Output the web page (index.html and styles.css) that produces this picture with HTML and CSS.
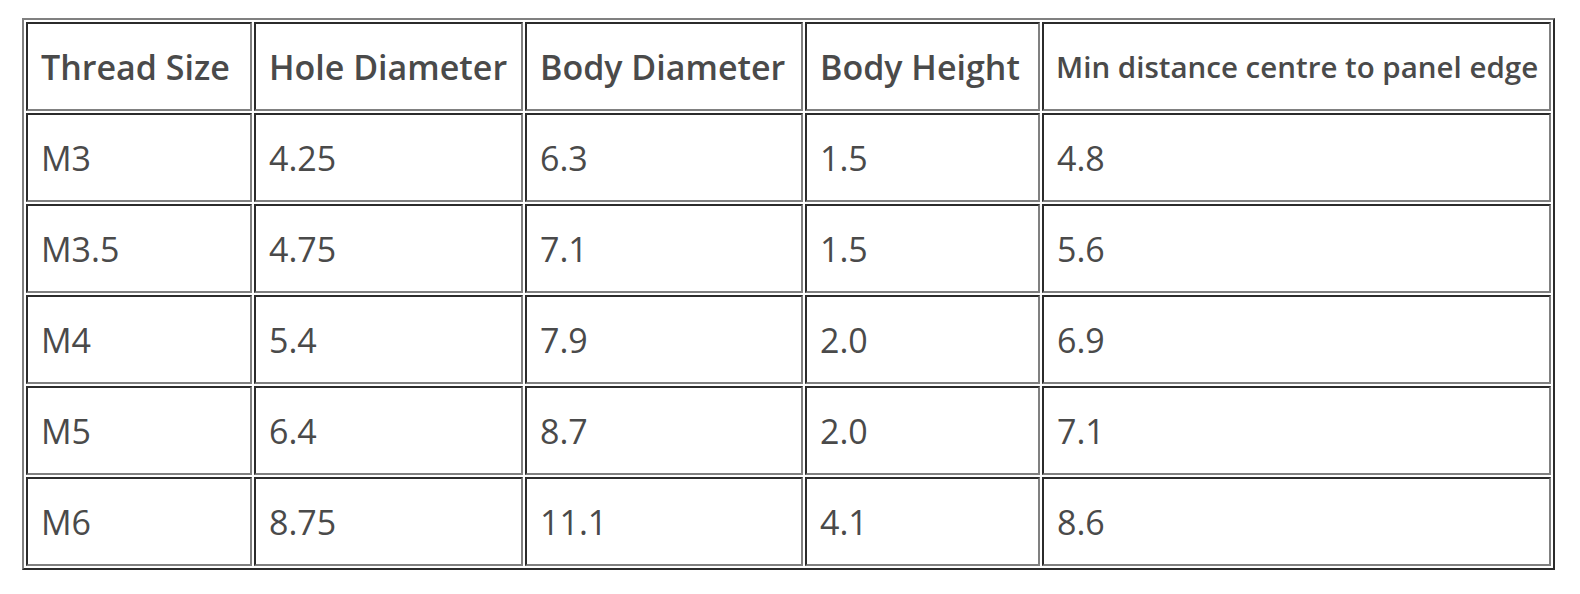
FILE: index.html
```html
<!DOCTYPE html>
<html>
<head>
<meta charset="utf-8">
<link rel="stylesheet" href="styles.css">
</head>
<body>
<div class="wrap">
<table class="spec">
  <colgroup>
    <col class="c1"><col class="c2"><col class="c3"><col class="c4"><col class="c5">
  </colgroup>
  <thead>
    <tr>
      <th>Thread Size</th>
      <th>Hole Diameter</th>
      <th>Body Diameter</th>
      <th>Body Height</th>
      <th class="small">Min distance centre to panel edge</th>
    </tr>
  </thead>
  <tbody>
    <tr><td>M3</td><td>4.25</td><td>6.3</td><td>1.5</td><td>4.8</td></tr>
    <tr><td>M3.5</td><td>4.75</td><td>7.1</td><td>1.5</td><td>5.6</td></tr>
    <tr><td>M4</td><td>5.4</td><td>7.9</td><td>2.0</td><td>6.9</td></tr>
    <tr><td>M5</td><td>6.4</td><td>8.7</td><td>2.0</td><td>7.1</td></tr>
    <tr><td>M6</td><td>8.75</td><td>11.1</td><td>4.1</td><td>8.6</td></tr>
  </tbody>
</table>
</div>
</body>
</html>
```
FILE: styles.css
```css
html, body {
  margin: 0;
  padding: 0;
  background: #ffffff;
}
.wrap {
  padding: 18px 0 0 22px;
}
.spec {
  border-collapse: separate;
  border-spacing: 2px;
  border: 2px solid;
  border-color: #808080 #2b2b2b #2b2b2b #808080;
  table-layout: fixed;
  width: 1533px;
  font-family: "Open Sans", "Liberation Sans", sans-serif;
  color: #4a4a4a;
}
.c1 { width: 226px; }
.c2 { width: 269px; }
.c3 { width: 278px; }
.c4 { width: 235px; }
.c5 { width: auto; }
.spec th,
.spec td {
  box-sizing: border-box;
  height: 89px;
  padding: 0 12px 0 13px;
  border: 2px solid;
  border-color: #2b2b2b #808080 #808080 #2b2b2b;
  text-align: left;
  vertical-align: middle;
  white-space: nowrap;
  font-size: 34px;
}
.spec th {
  font-weight: 600;
}
.spec th.small {
  font-size: 29.5px;
  font-weight: 600;
  padding-left: 12px;
}
.spec td {
  font-weight: 400;
}
```
